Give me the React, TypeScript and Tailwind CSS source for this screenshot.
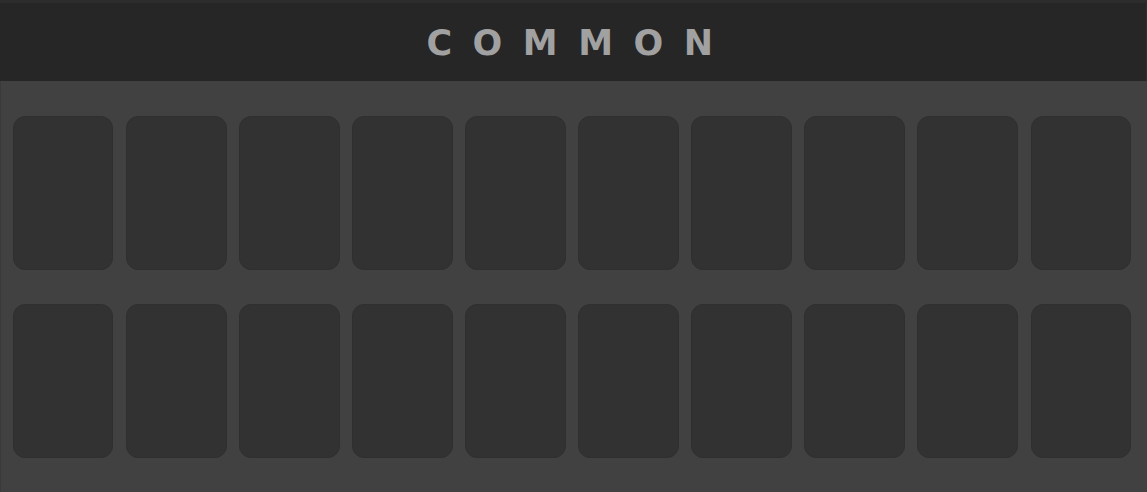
const slots = Array.from({ length: 20 }, (_, i) => i);

function Slot() {
  return <div className="h-[154px] rounded-xl border border-[#2f2f2f] bg-[#323232]" />;
}

export default function App() {
  return (
    <div className="flex h-[492px] w-full flex-col overflow-hidden bg-[#414141]">
      <div className="flex h-[81px] shrink-0 items-center justify-center border-t-[3px] border-r border-t-[#2c2c2c] border-r-[#2e2e2e] bg-[#262626] pl-[14px] pt-[2px]">
        <span className="font-['DejaVu_Sans',sans-serif] text-[35px] font-bold leading-none tracking-[20.5px] text-[#a1a1a1]">
          COMMON
        </span>
      </div>
      <div className="grid flex-1 grid-cols-10 gap-x-[12.6px] gap-y-[34px] border-l border-l-[#3a3a3a] pb-[34px] pl-[12px] pr-[16px] pt-[35px]">
        {slots.map((i) => (
          <Slot key={i} />
        ))}
      </div>
    </div>
  );
}
